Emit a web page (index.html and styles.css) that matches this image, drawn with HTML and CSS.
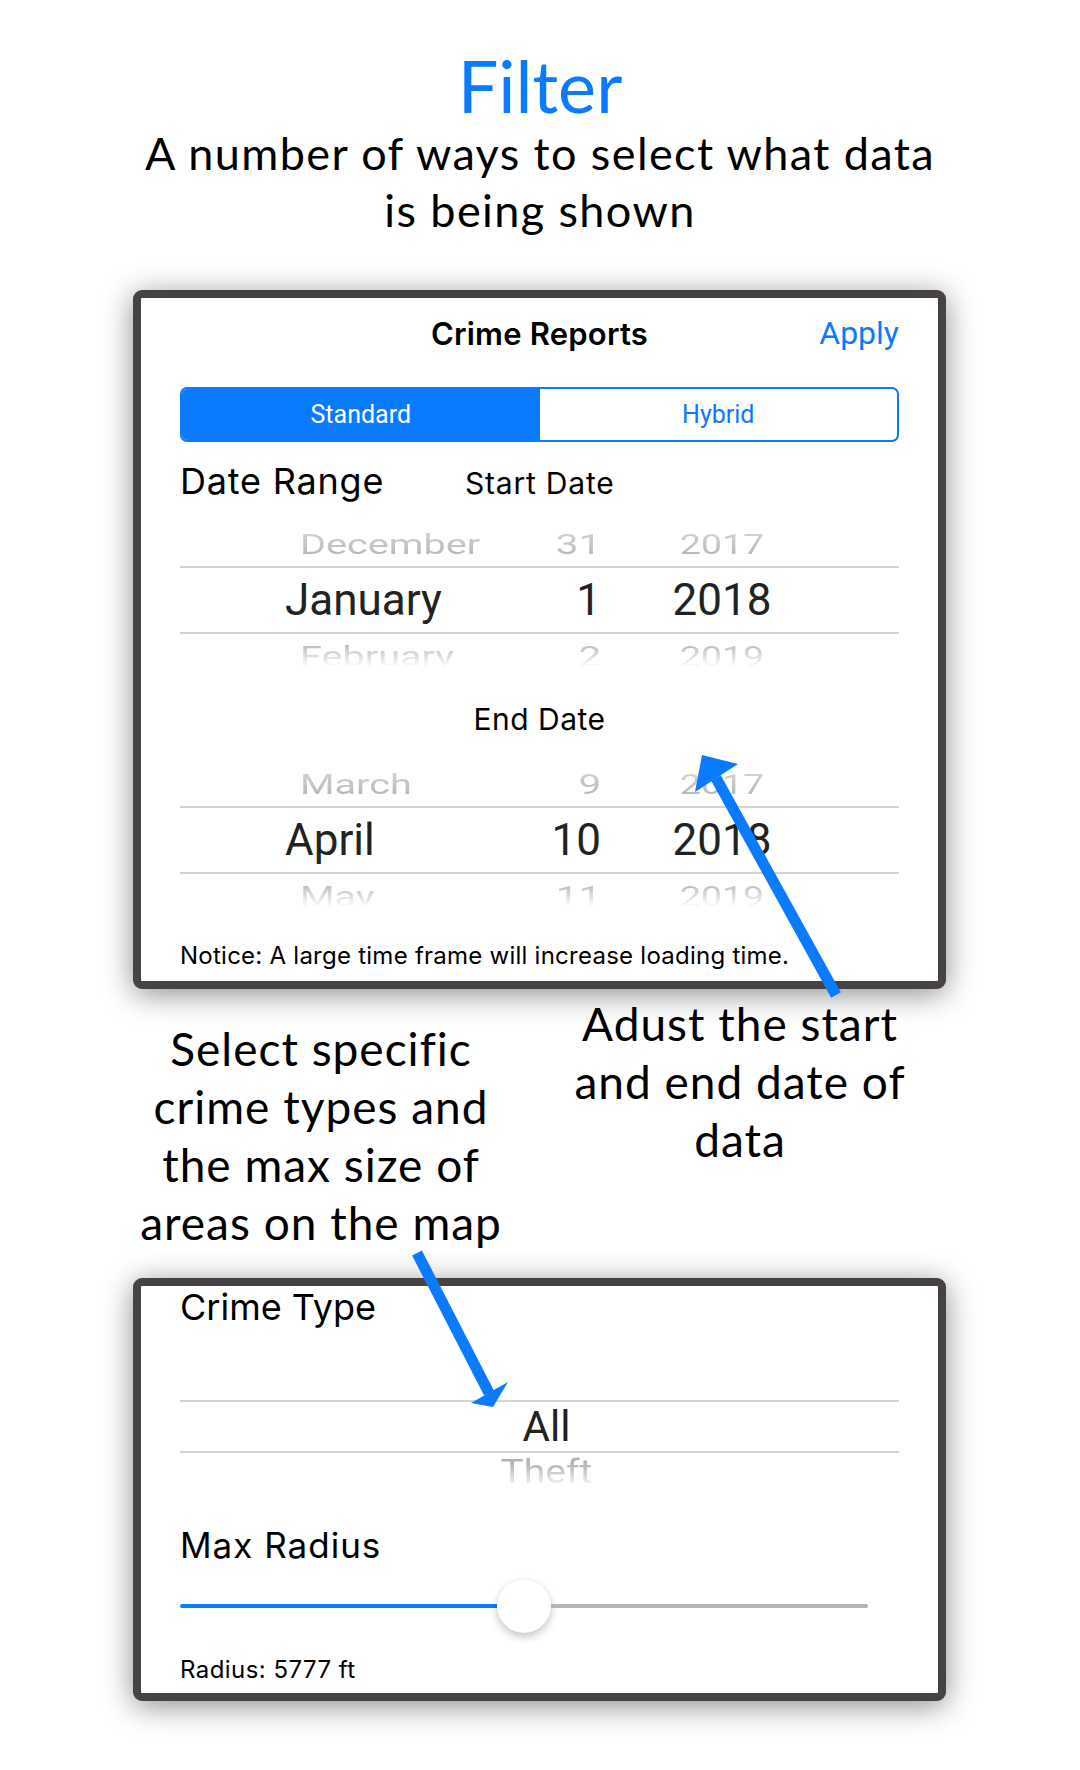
FILE: index.html
```html
<!DOCTYPE html>
<html lang="en">
<head>
<meta charset="utf-8">
<title>Filter</title>
<link rel="stylesheet" href="styles.css">
</head>
<body>
<div class="page">
  <header class="intro">
    <h1 class="title">Filter</h1>
    <p class="subtitle">A number of ways to select what data<br>is being shown</p>
  </header>

  <section class="device device-top">
    <div class="nav">
      <span class="nav-spacer"></span>
      <span class="nav-title">Crime Reports</span>
      <span class="nav-action">Apply</span>
    </div>
    <div class="segmented">
      <div class="seg seg-on">Standard</div>
      <div class="seg">Hybrid</div>
    </div>
    <div class="range-row">
      <span class="label-lg">Date Range</span>
      <span class="label-md">Start Date</span>
    </div>
    <div class="picker date-picker">
      <div class="row row-before"><span class="c-month">December</span><span class="c-day">31</span><span class="c-year">2017</span></div>
      <div class="row row-sel"><span class="c-month">January</span><span class="c-day">1</span><span class="c-year">2018</span></div>
      <div class="row row-after"><span class="c-month">February</span><span class="c-day">2</span><span class="c-year">2019</span></div>
    </div>
    <div class="end-label">End Date</div>
    <div class="picker date-picker picker-end">
      <div class="row row-before"><span class="c-month">March</span><span class="c-day">9</span><span class="c-year">2017</span></div>
      <div class="row row-sel"><span class="c-month">April</span><span class="c-day">10</span><span class="c-year">2018</span></div>
      <div class="row row-after"><span class="c-month">May</span><span class="c-day">11</span><span class="c-year">2019</span></div>
    </div>
    <p class="notice">Notice: A large time frame will increase loading time.</p>
  </section>

  <div class="notes">
    <p class="note note-left">Select specific<br>crime types and<br>the max size of<br>areas on the map</p>
    <p class="note note-right">Adust the start<br>and end date of<br>data</p>
  </div>

  <section class="device device-bottom">
    <div class="type-label">Crime Type</div>
    <div class="picker type-picker">
      <div class="type-empty"></div>
      <div class="type-sel">All</div>
      <div class="type-after"><span class="type-after-text">Theft</span></div>
    </div>
    <div class="radius-label">Max Radius</div>
    <div class="slider">
      <div class="slider-fill"></div>
      <div class="slider-thumb"></div>
      <div class="slider-rest"></div>
    </div>
    <p class="radius-value">Radius: 5777 ft</p>
  </section>

  <svg class="arrows" width="1080" height="1770" viewBox="0 0 1080 1770" aria-hidden="true">
    <line x1="836" y1="995" x2="716" y2="778" stroke="#0A7AFF" stroke-width="11"/>
    <polygon points="702,755 738,764 695,792" fill="#0A7AFF"/>
    <line x1="417" y1="1253" x2="489" y2="1393" stroke="#0A7AFF" stroke-width="11"/>
    <polygon points="471,1403 493,1407 508,1382" fill="#0A7AFF"/>
  </svg>
</div>
</body>
</html>
```

FILE: styles.css
```css
* { box-sizing: border-box; }

body {
  margin: 0;
  background: #ffffff;
}

.page {
  position: relative;
  width: 1080px;
  height: 1770px;
  overflow: hidden;
  font-family: Roboto, "Noto Sans", "Liberation Sans", sans-serif;
  color: #000;
}

/* ---------- heading ---------- */
.intro {
  padding-top: 45px;
  text-align: center;
  font-family: Lato, "Open Sans", sans-serif;
}

.title {
  margin: 0;
  font-size: 72px;
  line-height: 80px;
  font-weight: 400;
  color: #0A7AFF;
}

.subtitle {
  margin: 0;
  font-size: 45px;
  line-height: 57px;
  font-weight: 400;
  letter-spacing: 1.4px;
}

/* ---------- device frames ---------- */
.device {
  margin-left: 133px;
  width: 813px;
  border: 8px solid #474243;
  border-radius: 9px;
  background: #fff;
  padding: 0 39px;
  box-shadow: 0 5px 30px rgba(0, 0, 0, 0.45);
}

.device-top {
  margin-top: 51px;
  height: 699px;
}

.device-bottom {
  margin-top: 26px;
  height: 423px;
}

.nav-title,
.label-lg,
.label-md,
.end-label,
.notice,
.type-label,
.radius-label,
.radius-value {
  font-family: Inter, Roboto, "Noto Sans", sans-serif;
}

/* nav */
.nav {
  height: 70px;
  display: grid;
  grid-template-columns: 1fr auto 1fr;
  align-items: center;
}

.nav-title {
  font-size: 31px;
  line-height: 1;
  font-weight: 600;
  letter-spacing: 0.2px;
}

.nav-action {
  justify-self: end;
  font-size: 32px;
  line-height: 1;
  color: #0A7AFF;
}

/* segmented */
.segmented {
  margin-top: 19px;
  height: 55px;
  display: flex;
  border: 2px solid #0A7AFF;
  border-radius: 7px;
  overflow: hidden;
}

.seg {
  flex: 1;
  display: flex;
  align-items: center;
  justify-content: center;
  font-size: 25px;
  color: #0A7AFF;
}

.seg-on {
  background: #0A7AFF;
  color: #fff;
}

/* date range */
.range-row {
  margin-top: 21px;
  display: grid;
  grid-template-columns: 285px auto;
  align-items: baseline;
}

.label-lg {
  font-size: 36px;
  line-height: 36px;
  letter-spacing: 0.8px;
}

.label-md {
  font-size: 30px;
  line-height: 30px;
  letter-spacing: 0.8px;
}

/* pickers */
.picker {
  overflow: hidden;
}

.date-picker {
  margin-top: 31px;
  height: 138px;
}

.picker-end {
  margin-top: 36px;
}

.row {
  display: grid;
  grid-template-columns: 230px 126px 162px;
  padding-left: 105px;
  align-items: center;
  font-size: 44px;
  line-height: 1;
  white-space: nowrap;
}

.c-day {
  text-align: right;
  padding-right: 40px;
}

.c-year {
  text-align: center;
}

.row-sel {
  height: 68px;
  border-top: 2px solid #d4d4d4;
  border-bottom: 2px solid #d4d4d4;
  color: #222;
}

.row-before,
.row-after {
  color: #b4b4b4;
}

.row-before .c-month,
.row-after .c-month {
  transform-origin: left center;
  transform: translateX(15px) scale(0.9, 0.62);
}

.row-before .c-day,
.row-after .c-day {
  transform-origin: right center;
  transform: translateX(-3px) scale(0.92, 0.62);
}

.row-before .c-year,
.row-after .c-year {
  transform-origin: center center;
  transform: scale(0.85, 0.62);
}

.row-before {
  height: 36px;
  transform: translateY(-7px);
  -webkit-mask-image: linear-gradient(to bottom, rgba(0,0,0,0.45), #000);
  mask-image: linear-gradient(to bottom, rgba(0,0,0,0.45), #000);
}

.row-after {
  height: 34px;
  transform: translateY(1px);
  -webkit-mask-image: linear-gradient(to bottom, #000 20%, rgba(0,0,0,0) 95%);
  mask-image: linear-gradient(to bottom, #000 20%, rgba(0,0,0,0) 95%);
}

.end-label {
  margin-top: 36px;
  text-align: center;
  font-size: 30px;
  line-height: 30px;
  letter-spacing: 0.5px;
}

.notice {
  margin: 36px 0 0;
  font-size: 24px;
  line-height: 24px;
  letter-spacing: 0.25px;
}

/* ---------- annotations ---------- */
.notes {
  display: flex;
  padding-left: 121px;
  font-family: Lato, "Open Sans", sans-serif;
}

.note {
  margin: 0;
  font-size: 46px;
  line-height: 58px;
  letter-spacing: 1px;
  text-align: center;
  white-space: nowrap;
}

.note-left {
  width: 400px;
  padding-top: 31px;
}

.note-right {
  width: 360px;
  margin-left: 39px;
  padding-top: 6px;
}

/* ---------- crime type ---------- */
.type-label {
  margin-top: 3px;
  font-size: 36px;
  line-height: 36px;
}

.type-picker {
  text-align: center;
}

.type-empty {
  height: 75px;
}

.type-sel {
  height: 53px;
  padding-left: 14px;
  border-top: 2px solid #d4d4d4;
  border-bottom: 2px solid #d4d4d4;
  display: flex;
  align-items: center;
  justify-content: center;
  font-size: 42px;
  line-height: 1;
  color: #222;
}

.type-after {
  height: 36px;
  padding-left: 14px;
  display: flex;
  align-items: center;
  justify-content: center;
  font-size: 42px;
  line-height: 1;
  color: #b4b4b4;
  -webkit-mask-image: linear-gradient(to bottom, #000 30%, rgba(0,0,0,0) 100%);
  mask-image: linear-gradient(to bottom, #000 30%, rgba(0,0,0,0) 100%);
}

.type-after-text {
  transform: translateY(1px) scale(0.93, 0.8);
}

.radius-label {
  margin-top: 39px;
  font-size: 35px;
  line-height: 35px;
  letter-spacing: 1px;
}

.slider {
  margin-top: 16px;
  height: 54px;
  display: flex;
  align-items: center;
}

.slider-fill {
  width: 317px;
  height: 4px;
  border-radius: 2px 0 0 2px;
  background: #0A7AFF;
}

.slider-thumb {
  width: 54px;
  height: 54px;
  border-radius: 50%;
  background: #fff;
  box-shadow: 0 4px 9px rgba(0, 0, 0, 0.22), 0 0 1px rgba(0, 0, 0, 0.15);
}

.slider-rest {
  width: 317px;
  height: 4px;
  border-radius: 0 2px 2px 0;
  background: #b5b5b5;
}

.radius-value {
  margin: 25px 0 0;
  font-size: 24px;
  line-height: 24px;
  letter-spacing: 0.45px;
}

/* ---------- arrows overlay ---------- */
.arrows {
  position: absolute;
  top: 0;
  left: 0;
  pointer-events: none;
}
```
